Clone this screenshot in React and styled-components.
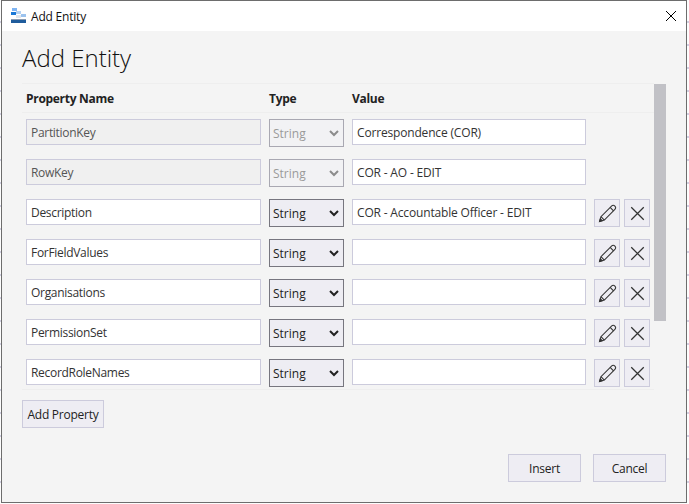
import React from 'react'
import styled, { createGlobalStyle } from 'styled-components'

const GlobalStyle = createGlobalStyle`
  html, body {
    margin: 0;
    padding: 0;
    background: #fdfdfd;
  }
  * {
    box-sizing: border-box;
  }
`

const Page = styled.div`
  width: 689px;
  height: 504px;
  padding-left: 1px;
  overflow: hidden;
  font-family: "Open Sans", "Noto Sans", sans-serif;
  color: #222;
  background: repeating-linear-gradient(#fdfdfd 0 21px, #d2d0e2 21px 23px);
`
const Window = styled.div`
  width: 686px;
  height: 503px;
  border: 1px solid #6d6d6d;
  background: #f4f4f4;
  display: flex;
  flex-direction: column;
`
const TitleBar = styled.div`
  height: 30px;
  flex: none;
  background: #fff;
  display: flex;
  align-items: center;
  padding: 0 9px 0 9px;
`
const TitleText = styled.span`
  font-size: 12px;
  letter-spacing: -0.2px;
  color: #111;
  margin-left: 5px;
  flex: 1;
`
const CloseButton = styled.button`
  border: 0;
  padding: 0;
  background: transparent;
  width: 12px;
  height: 12px;
  display: flex;
`
const Body = styled.div`
  flex: 1;
  display: flex;
  flex-direction: column;
  padding: 11px 20px 19px 20px;
`
const Heading = styled.h1`
  margin: 0;
  font-size: 24px;
  font-weight: 300;
  line-height: 32px;
  color: #111;
  height: 41px;
`
const TableArea = styled.div`
  display: flex;
  height: 307px;
`
const Table = styled.div`
  width: 632px;
  border-top: 1px solid #eeeeee;
  border-bottom: 1px solid #eeeeee;
`
const HeaderRow = styled.div`
  height: 29px;
  display: flex;
  align-items: center;
  border-bottom: 1px solid #eeeeee;
  padding-left: 4px;
`
const HeaderCell = styled.div`
  width: ${p => p.$width}px;
  font-size: 12px;
  font-weight: 700;
  letter-spacing: -0.3px;
  color: #222;
`
const Row = styled.div`
  height: 40px;
  display: flex;
  align-items: flex-start;
  padding: 6px 0 0 4px;
`
const TextInput = styled.input`
  width: ${p => p.$width}px;
  height: 26px;
  margin-right: 8px;
  padding: 0 4px;
  border: 1px solid #cccbdc;
  border-radius: 0;
  outline: none;
  background: ${p => (p.disabled ? '#f0f0f0' : '#fff')};
  font-family: inherit;
  font-size: 12px;
  letter-spacing: ${p => p.$tracking}px;
  color: #333;
  &:disabled {
    color: #555;
  }
`
const SelectWrap = styled.div`
  position: relative;
  width: 75px;
  height: 28px;
  margin-right: 8px;
`
const Select = styled.select`
  appearance: none;
  width: 100%;
  height: 100%;
  padding: 0 0 0 3px;
  border: 1px solid #77767f;
  border-radius: 0;
  background: #eeedf3;
  font-family: inherit;
  font-size: 12px;
  color: #222;
  &:disabled {
    border-color: #a9a8b2;
    background: #f2f2f4;
    color: #9a9a9a;
    opacity: 1;
  }
`
const Chevron = styled.svg`
  position: absolute;
  right: 5px;
  top: 11px;
  width: 10px;
  height: 7px;
  pointer-events: none;
  color: ${p => (p.$muted ? '#8c8c8c' : '#222')};
`
const Actions = styled.div`
  display: flex;
  gap: 4px;
`
const IconButton = styled.button`
  width: 26px;
  height: 28px;
  padding: 0;
  border: 1px solid #cccbdc;
  background: #eeedf3;
  display: flex;
  align-items: center;
  justify-content: center;
  color: #333;
`
const ScrollTrack = styled.div`
  width: 12px;
  margin-top: 1px;
`
const ScrollThumb = styled.div`
  height: 237px;
  background: #c1c1c6;
`
const TextButton = styled.button`
  height: 28px;
  width: ${p => p.$width}px;
  padding: 0;
  border: 1px solid #cccbdc;
  background: #eeedf3;
  font-family: inherit;
  font-size: 12px;
  letter-spacing: -0.25px;
  color: #222;
`
const AddRow = styled.div`
  margin-top: 10px;
`
const Footer = styled.div`
  margin-top: 26px;
  display: flex;
  justify-content: flex-end;
  gap: 12px;
`

const rows = [
  { name: 'PartitionKey', value: 'Correspondence (COR)', locked: true },
  { name: 'RowKey', value: 'COR - AO - EDIT', locked: true },
  { name: 'Description', value: 'COR - Accountable Officer - EDIT' },
  { name: 'ForFieldValues', value: '' },
  { name: 'Organisations', value: '' },
  { name: 'PermissionSet', value: '' },
  { name: 'RecordRoleNames', value: '' },
]

const AppIcon = () => (
  <svg width="15" height="16" viewBox="0 0 15 16">
    <rect x="1" y="0" width="5" height="3" fill="#7fb4f2" />
    <rect x="0" y="4" width="5" height="3" fill="#1a78d6" />
    <rect x="5" y="3" width="5" height="3" fill="#b5d2f2" />
    <rect x="5" y="7" width="5" height="3" fill="#dfe6ee" />
    <rect x="10" y="6" width="5" height="3" fill="#9cc3ee" />
    <rect x="0" y="11" width="15" height="1" fill="#8a9bb0" />
    <rect x="0" y="12" width="15" height="3" fill="#1f5c9c" />
  </svg>
)

const CloseIcon = ({ size = 12 }) => (
  <svg width={size} height={size} viewBox="0 0 12 12" fill="none" stroke="currentColor" strokeWidth="1">
    <path d="M1 1 L11 11 M11 1 L1 11" />
  </svg>
)

const PencilIcon = () => (
  <svg width="19" height="19" viewBox="0 0 18 18" fill="none" stroke="currentColor" strokeWidth="1">
    <path d="M1.5 16.5 L2.8 12 L12.8 2 C13.8 1 15 1 16 2 C17 3 17 4.2 16 5.2 L6 15.2 Z" />
    <path d="M2.8 12 L6 15.2 M11.5 3.3 L14.7 6.5" />
    <path d="M1.5 16.5 L2.2 14 L4 15.8 Z" fill="currentColor" />
  </svg>
)

const TypeSelect = ({ disabled }) => (
  <SelectWrap>
    <Select disabled={disabled} defaultValue="String">
      <option>String</option>
    </Select>
    <Chevron $muted={disabled} viewBox="0 0 10 7" fill="none" stroke="currentColor" strokeWidth="2">
      <path d="M1 1 L5 5 L9 1" />
    </Chevron>
  </SelectWrap>
)

const App = () => {
  return (
    <Page>
      <GlobalStyle />
      <Window>
        <TitleBar>
          <AppIcon />
          <TitleText>Add Entity</TitleText>
          <CloseButton><CloseIcon /></CloseButton>
        </TitleBar>
        <Body>
          <Heading>Add Entity</Heading>
          <TableArea>
            <Table>
              <HeaderRow>
                <HeaderCell $width={243}>Property Name</HeaderCell>
                <HeaderCell $width={83}>Type</HeaderCell>
                <HeaderCell $width={200}>Value</HeaderCell>
              </HeaderRow>
              {rows.map(row => (
                <Row key={row.name}>
                  <TextInput $width={235} $tracking={-0.3} disabled={row.locked} defaultValue={row.name} />
                  <TypeSelect disabled={row.locked} />
                  <TextInput $width={234} $tracking={-0.17} defaultValue={row.value} />
                  {!row.locked && (
                    <Actions>
                      <IconButton><PencilIcon /></IconButton>
                      <IconButton><CloseIcon size={15} /></IconButton>
                    </Actions>
                  )}
                </Row>
              ))}
            </Table>
            <ScrollTrack>
              <ScrollThumb />
            </ScrollTrack>
          </TableArea>
          <AddRow>
            <TextButton $width={82}>Add Property</TextButton>
          </AddRow>
          <Footer>
            <TextButton $width={73}>Insert</TextButton>
            <TextButton $width={73}>Cancel</TextButton>
          </Footer>
        </Body>
      </Window>
    </Page>
  )
}

export default App
